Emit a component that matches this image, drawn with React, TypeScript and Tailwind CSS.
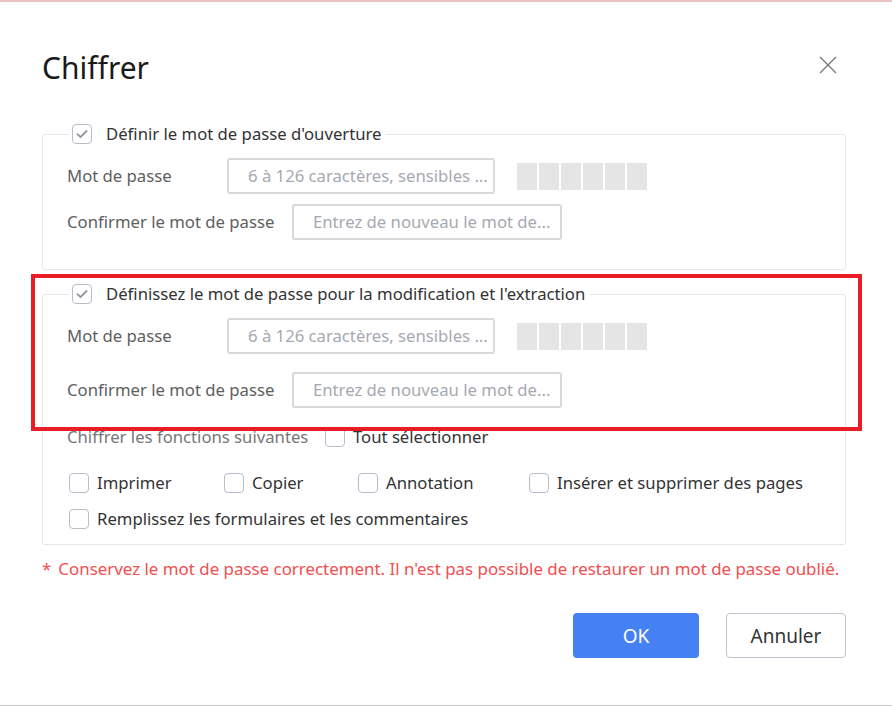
import React from "react";

const font = { fontFamily: '"Noto Sans", "Open Sans", Arial, sans-serif' };

function Box({ checked = false }: { checked?: boolean }) {
  return (
    <span className="flex h-5 w-5 shrink-0 items-center justify-center rounded-[4px] border-[1.5px] border-[#b8bdcc] bg-white">
      {checked && (
        <svg width="14" height="14" viewBox="0 0 14 14" fill="none">
          <path d="M2.5 7.2l3 3 6-6.2" stroke="#8e94a3" strokeWidth="1.8" strokeLinecap="round" strokeLinejoin="round" />
        </svg>
      )}
    </span>
  );
}

function Strength() {
  return (
    <div className="ml-[22px] flex gap-[2px]">
      {[0, 1, 2, 3, 4, 5].map((i) => (
        <span key={i} className="h-[27px] w-5 bg-[#e5e5e5]" />
      ))}
    </div>
  );
}

function Field({ w, placeholder }: { w: string; placeholder: string }) {
  return (
    <div
      className={`flex h-9 items-center overflow-hidden whitespace-nowrap rounded-[3px] border-2 border-[#d9d9d9] pl-[19px] text-[#a6a9b1] ${w}`}
    >
      {placeholder}
    </div>
  );
}

function Legend({ children }: { children: React.ReactNode }) {
  return (
    <legend className="ml-[2px] flex h-5 items-center gap-[14px] pl-[3px] pr-[4px] text-[#333]">
      <Box checked />
      <span>{children}</span>
    </legend>
  );
}

function PasswordRows({ gap }: { gap: string }) {
  return (
    <div className={`flex flex-col pt-[14px] ${gap}`}>
      <div className="flex h-9 items-center">
        <span className="w-[160px] text-[#5e5e5e]">Mot de passe</span>
        <Field w="w-[268px]" placeholder="6 à 126 caractères, sensibles ..." />
        <Strength />
      </div>
      <div className="flex h-9 items-center">
        <span className="w-[225px] text-[#5e5e5e]">Confirmer le mot de passe</span>
        <Field w="w-[270px]" placeholder="Entrez de nouveau le mot de..." />
      </div>
    </div>
  );
}

function Option({ label, w }: { label: string; w?: string }) {
  return (
    <div className={`flex items-center gap-2 ${w ?? ""}`}>
      <Box />
      <span className="text-[#333]">{label}</span>
    </div>
  );
}

export default function App() {
  return (
    <div
      className="relative h-[706px] w-[892px] overflow-hidden border-t-2 border-b border-t-[#e9c3c3] border-b-[#c9c9c9] bg-white text-[16.7px] leading-5"
      style={font}
    >
      <div className="pl-[42px] pr-[46px]">
        <div className="mt-[46px] flex h-10 justify-between">
          <h1 className="text-[30px] leading-10 text-[#1a1a1a]">Chiffrer</h1>
          <svg className="mr-[9px] mt-[8px]" width="18" height="18" viewBox="0 0 18 18" fill="none">
            <path d="M1 1l16 16M17 1L1 17" stroke="#7a7a7a" strokeWidth="1.4" />
          </svg>
        </div>

        <fieldset className="mt-9 rounded-[3px] border border-[#e6e6e6] pb-[29px] pl-6">
          <Legend>Définir le mot de passe d'ouverture</Legend>
          <PasswordRows gap="gap-[10px]" />
        </fieldset>

        <fieldset className="mt-[14px] rounded-[3px] border border-[#e6e6e6] pb-[15px] pl-6">
          <Legend>Définissez le mot de passe pour la modification et l'extraction</Legend>
          <PasswordRows gap="gap-[18px]" />
          <div className="mt-[19px] flex h-5 items-center">
            <span className="w-[258px] text-[#777]">Chiffrer les fonctions suivantes</span>
            <Option label="Tout sélectionner" />
          </div>
          <div className="ml-[2px] mt-[26px] flex h-5 items-center">
            <Option label="Imprimer" w="w-[155px]" />
            <Option label="Copier" w="w-[134px]" />
            <Option label="Annotation" w="w-[171px]" />
            <Option label="Insérer et supprimer des pages" />
          </div>
          <div className="ml-[2px] mt-4 flex h-5 items-center">
            <Option label="Remplissez les formulaires et les commentaires" />
          </div>
        </fieldset>

        <p className="mt-[14px] flex h-5 items-center gap-[7px] whitespace-nowrap text-[16.9px] text-[#f24f4f]">
          <span>*</span>
          <span>Conservez le mot de passe correctement. Il n'est pas possible de restaurer un mot de passe oublié.</span>
        </p>

        <div className="mt-[34px] flex justify-end gap-[27px]">
          <button className="h-[45px] w-[126px] rounded-[4px] bg-[#4681f4] text-[19px] text-white">OK</button>
          <button className="h-[45px] w-[120px] rounded-[4px] border border-[#bfc5cf] bg-white text-[19px] text-[#333]">
            Annuler
          </button>
        </div>
      </div>

      <div className="pointer-events-none absolute left-[31px] top-[272px] h-[157px] w-[831px] border-4 border-[#e81d25]" />
    </div>
  );
}
